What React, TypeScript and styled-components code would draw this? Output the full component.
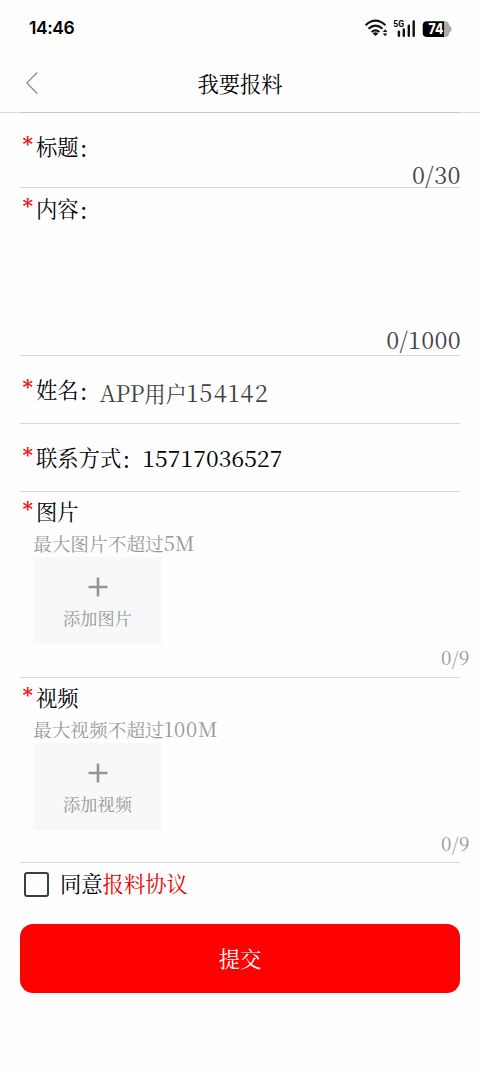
import React from 'react';
import styled, { createGlobalStyle } from 'styled-components';

const GlobalStyle = createGlobalStyle`
  * { box-sizing: border-box; }
  body {
    margin: 0;
    background: #fefefe;
    color: #000;
    font-family: "Noto Serif CJK SC", "Noto Sans CJK SC", serif;
    font-size: 21.3px;
    font-weight: 400;
  }
`;

const Screen = styled.div`
  width: 480px;
  height: 1072px;
  display: flex;
  flex-direction: column;
  overflow: hidden;
`;

const StatusBar = styled.header`
  height: 56px;
  display: flex;
  align-items: center;
  justify-content: space-between;
  padding: 0 28px 0 29px;
`;

const Clock = styled.span`
  font: 600 17.5px/20px Inter, sans-serif;
  letter-spacing: -0.45px;
`;

const StatusIcons = styled.svg`
  width: 88px;
  height: 22px;
  display: block;
`;

const NavBar = styled.nav`
  height: 57px;
  padding-bottom: 3px;
  display: grid;
  grid-template-columns: 60px 1fr 60px;
  align-items: center;
  border-bottom: 1px solid #dcdcdc;
`;

const BackIcon = styled.svg`
  width: 14px;
  height: 24px;
  margin-left: 25px;
  display: block;
`;

const Title = styled.h1`
  margin: 0;
  font-size: 21.3px;
  line-height: 32px;
  font-weight: 400;
  text-align: center;
`;

const Form = styled.form`
  margin: -1px 20px 0;
  border-top: 1px solid #c8c8c8;
  display: flex;
  flex-direction: column;
`;

const Row = styled.section<{ $height: number; $top: number }>`
  height: ${p => p.$height}px;
  padding: ${p => p.$top}px 0 0 2px;
  border-bottom: 1px solid #d8d8da;
  display: flex;
  flex-direction: column;
`;

const Line = styled.div`
  display: flex;
  height: 32px;
  line-height: 32px;
  white-space: nowrap;
`;

const Required = styled.span`
  width: 14px;
  padding-left: 0.5px;
  color: #ee1515;
  font-family: "DejaVu Serif", serif;
  font-size: 20px;
  line-height: 29px;
  font-weight: 700;
`;

const Colon = styled.span`
  width: 21px;
  padding-top: 2px;
  font-weight: 500;
`;

const Latin = styled.span<{ $size: number; $spacing: number }>`
  font-family: "Noto Serif CJK SC", "Liberation Serif", serif;
  font-size: ${p => p.$size}px;
  letter-spacing: ${p => p.$spacing}px;
`;

const Value = styled.span<{ $muted?: boolean }>`
  color: ${p => (p.$muted ? '#444' : '#000')};
  padding-top: ${p => (p.$muted ? 3 : 1)}px;
`;

const Counter = styled.div<{ $small?: boolean }>`
  margin-top: auto;
  margin-right: ${p => (p.$small ? -10 : -1)}px;
  margin-bottom: ${p => (p.$small ? 12 : 4)}px;
  height: 24px;
  line-height: 24px;
  text-align: right;
  color: ${p => (p.$small ? '#999' : '#444448')};
`;

const Hint = styled.div`
  margin: 2px 0 0 11px;
  height: 29px;
  line-height: 28px;
  font-size: 18.7px;
  color: #999;
  white-space: nowrap;
`;

const AddTile = styled.button`
  margin: 0 0 0 11px;
  padding: 20px 0 0;
  width: 129px;
  height: 87px;
  flex: none;
  border: 0;
  background: #f7f8fa;
  color: #959595;
  font: inherit;
  font-size: 17.2px;
  line-height: 24px;
  display: flex;
  flex-direction: column;
  align-items: center;
  gap: 9px;
`;

const PlusIcon = styled.svg`
  width: 20px;
  height: 20px;
  flex: none;
`;

const Agreement = styled.label`
  height: 42px;
  padding-left: 4px;
  display: flex;
  align-items: center;
  line-height: 32px;
`;

const CheckBox = styled.span`
  width: 25px;
  height: 25px;
  margin-right: 11px;
  border: 2px solid #3c3c43;
  border-radius: 3px;
`;

const AgreementText = styled.span`
  padding-bottom: 2px;
`;

const AgreementLink = styled.span`
  color: #e60000;
`;

const Submit = styled.button`
  margin: 19px 0 0;
  padding: 0 0 2px;
  height: 69px;
  border: 0;
  border-radius: 13px;
  background: #ff0000;
  color: #fff;
  font: inherit;
  line-height: 32px;
`;

type UploadProps = {
  label: string;
  hint: string;
  limit: string;
  action: string;
  height: number;
  limitSpacing: number;
};

const Upload = ({ label, hint, limit, action, height, limitSpacing }: UploadProps) => (
  <Row $height={height} $top={3}>
    <Line><Required>*</Required>{label}</Line>
    <Hint>{hint}<Latin $size={20} $spacing={limitSpacing}>{limit}</Latin></Hint>
    <AddTile type="button">
      <PlusIcon viewBox="0 0 20 20">
        <path d="M10 0.5V19.5M0.5 10H19.5" stroke="#959595" strokeWidth="2.6" />
      </PlusIcon>
      {action}
    </AddTile>
    <Counter $small><Latin $size={19} $spacing={0.5}>0/9</Latin></Counter>
  </Row>
);

export default function App() {
  return (
    <Screen>
      <GlobalStyle />
      <StatusBar>
        <Clock>14:46</Clock>
        <StatusIcons viewBox="0 0 88 22">
          <g fill="none" stroke="#111" strokeWidth="2.1">
            <path d="M1.6 8.2Q11.5 -0.8 21.4 8.2" />
            <path d="M4.5 11.7Q11.5 5.5 18.5 11.7" />
            <path d="M7.6 15Q11.5 11.8 15.4 15" />
          </g>
          <path d="M8.7 16.4Q11.5 14.2 14.3 16.4L11.5 19.1Z" fill="#111" />
          <path d="M18.8 14.9L21.1 12.3L23.4 14.9ZM18.8 16.6H23.4L21.1 19.2Z" fill="#111" />
          <text x="29.3" y="10.3" fontFamily="Roboto" fontWeight="700" fontSize="9.5" textLength="10.8" lengthAdjust="spacingAndGlyphs">5G</text>
          <path d="M34.9 14.7V18.7M39.8 12.5V18.7M44.8 8.7V18.7M49.7 4.4V18.7" stroke="#111" strokeWidth="2.4" strokeLinecap="round" />
          <path d="M79.5 4.3H81Q85 4.3 85.3 8.8Q87.7 9.2 87.7 12T85.3 15.4Q85 20 81 20H79.5Z" fill="#aaa" />
          <path d="M80 4.3H63Q58.7 4.3 58.7 8.6V15.7Q58.7 20 63 20H80Z" fill="#000" />
          <text x="64.5" y="17.2" fill="#fff" fontFamily="Inter" fontWeight="800" fontSize="14" textLength="15" lengthAdjust="spacingAndGlyphs">74</text>
        </StatusIcons>
      </StatusBar>
      <NavBar>
        <BackIcon viewBox="0 0 14 24">
          <path d="M12.3 1.5L1.8 12L12.3 22.5" fill="none" stroke="#888" strokeWidth="1.2" />
        </BackIcon>
        <Title>我要报料</Title>
      </NavBar>
      <Form>
        <Row $height={75} $top={17}>
          <Line><Required>*</Required>标题<Colon>：</Colon></Line>
          <Counter><Latin $size={23.5} $spacing={0.5}>0/30</Latin></Counter>
        </Row>
        <Row $height={168} $top={4}>
          <Line><Required>*</Required>内容<Colon>：</Colon></Line>
          <Counter><Latin $size={23.5} $spacing={0.3}>0/1000</Latin></Counter>
        </Row>
        <Row $height={68} $top={17}>
          <Line>
            <Required>*</Required>姓名<Colon>：</Colon>
            <Value $muted>
              <Latin $size={23} $spacing={-0.3}>APP</Latin>用户<Latin $size={23.5} $spacing={1.3}>154142</Latin>
            </Value>
          </Line>
        </Row>
        <Row $height={68} $top={17}>
          <Line>
            <Required>*</Required>联系方式<Colon>：</Colon>
            <Value><Latin $size={23} $spacing={0.1}>15717036527</Latin></Value>
          </Line>
        </Row>
        <Upload height={186} label="图片" hint="最大图片不超过" limit="5M" limitSpacing={0} action="添加图片" />
        <Upload height={185} label="视频" hint="最大视频不超过" limit="100M" limitSpacing={0.8} action="添加视频" />
        <Agreement>
          <CheckBox />
          <AgreementText>同意<AgreementLink>报料协议</AgreementLink></AgreementText>
        </Agreement>
        <Submit type="button">提交</Submit>
      </Form>
    </Screen>
  );
}
